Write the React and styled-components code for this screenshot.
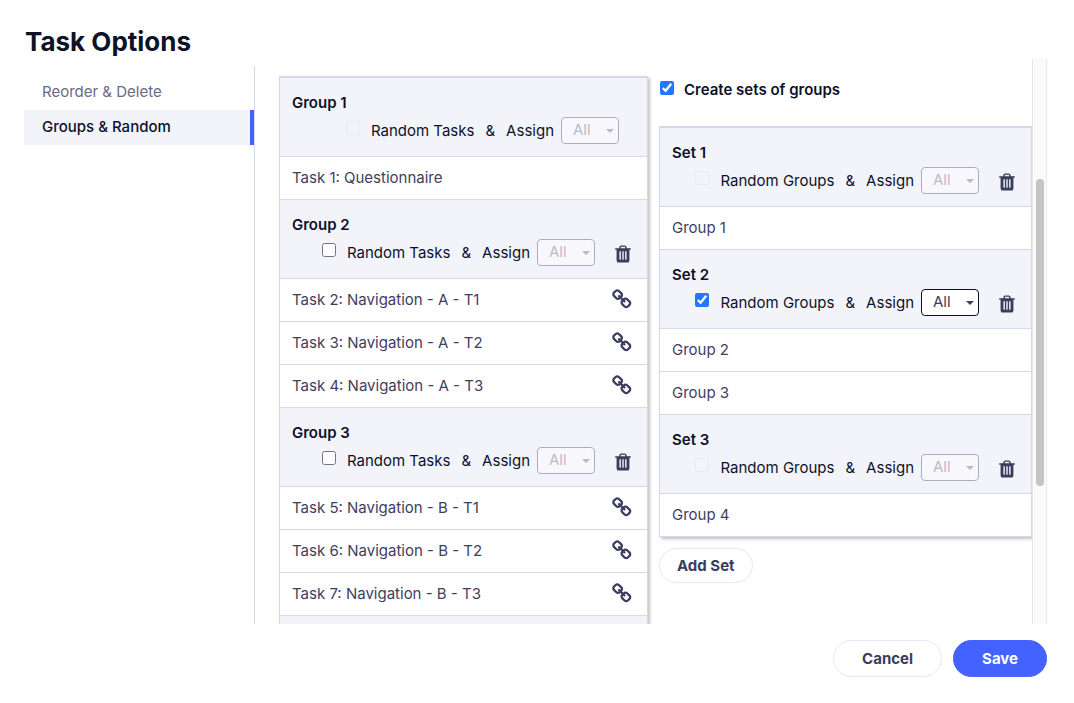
import React, { useState } from "react";
import styled, { createGlobalStyle, css } from "styled-components";

const GlobalStyle = createGlobalStyle`
  *, *::before, *::after { box-sizing: border-box; }
  body {
    margin: 0;
    background: #fff;
    color: #0d1229;
    font-family: Inter, "Liberation Sans", sans-serif;
    font-size: 15px;
    line-height: 20px;
  }
  button, select, input { font-family: inherit; margin: 0; }
`;

const Dialog = styled.main`
  display: flex;
  flex-direction: column;
  height: 100vh;
  padding: 24px 27px 26px 24px;
`;

const Title = styled.h1`
  margin: 0;
  padding-left: 1px;
  font-size: 26px;
  line-height: 35px;
  font-weight: 700;
`;

const Body = styled.div`
  display: flex;
  flex: 1;
  min-height: 0;
`;

const Sidebar = styled.nav`
  flex: 0 0 231px;
  display: flex;
  flex-direction: column;
  margin-top: 7px;
  padding-top: 9px;
  border-right: 1px solid #d3d8ea;
`;

const NavLink = styled.a`
  padding: 7px 18px 8px;
  color: #696a86;
  text-decoration: none;
  ${(p) =>
    p.$active &&
    css`
      color: #0d1229;
      font-weight: 500;
      background: #f3f4fa;
      border-right: 4px solid #4362ff;
    `}
`;

const Panels = styled.div`
  flex: 1;
  min-width: 0;
  display: grid;
  grid-template-columns: 369fr 373fr;
  gap: 11px;
  align-items: start;
  padding: 17px 0 0 24px;
  overflow: hidden;
`;

const ScrollTrack = styled.div`
  flex: 0 0 15px;
  display: flex;
  flex-direction: column;
  padding: 120px 3px 0 3px;
  background: #fafafa;
  border: solid #e8e8e8;
  border-width: 0 1px;
`;

const ScrollThumb = styled.div`
  flex: 0 1 307px;
  margin-right: -1px;
  border-radius: 4px;
  background: #c4c4c4;
`;

const Board = styled.div`
  border: 1px solid #d3d8ea;
  border-top-width: 2px;
  border-bottom: 0;
  box-shadow: 2px 2px 3px rgba(0, 0, 0, 0.24);
`;

const GroupHeader = styled.header`
  display: flex;
  flex-direction: column;
  height: 79px;
  padding: 15px 0 0 12px;
  background: #f3f4fa;
  border-bottom: 1px solid #d3d8ea;
`;

const GroupName = styled.h2`
  margin: 0;
  font-size: 15px;
  line-height: 20px;
  font-weight: 600;
`;

const Controls = styled.div`
  display: flex;
  align-items: center;
  justify-content: flex-end;
  height: 35px;
  padding-right: ${(p) => (p.$deletable ? 14 : 28)}px;
`;

const CheckLabel = styled.label`
  display: flex;
  align-items: center;
  gap: ${(p) => (p.$strong ? 10 : 11)}px;
  font-weight: ${(p) => (p.$strong ? 600 : 400)};
`;

const Checkbox = styled.input.attrs({ type: "checkbox" })`
  width: 14px;
  height: 14px;
  margin-bottom: 5px;
  accent-color: #2376ff;
  &:disabled { opacity: 0.25; }
`;

const Ampersand = styled.span`
  padding: 0 11px;
`;

const AssignLabel = styled.label`
  display: flex;
  align-items: center;
  gap: 7px;
`;

const SelectBox = styled.span`
  position: relative;
  display: flex;
  color: #3b3d5c;
  svg {
    position: absolute;
    right: 5px;
    top: 12px;
    pointer-events: none;
  }
`;

const Select = styled.select`
  appearance: none;
  width: 58px;
  height: 27px;
  padding: 0 20px 2px 11px;
  border: 1px solid #0d1229;
  border-radius: 4px;
  background: #fff;
  color: inherit;
  font-size: 15px;
  opacity: 1;
  &:disabled {
    color: #b9bac8;
    border-color: #adaebb;
    background: #f8f8fc;
  }
  &:disabled + svg { color: #b9bac8; }
`;

const IconButton = styled.button`
  display: flex;
  padding: 0;
  border: 0;
  background: none;
  color: #3b3d5c;
  cursor: pointer;
`;

const DeleteButton = styled(IconButton)`
  margin: 2px 0 0 18px;
`;

const Items = styled.ul`
  margin: 0;
  padding: 0;
  list-style: none;
`;

const Item = styled.li`
  display: flex;
  align-items: center;
  justify-content: space-between;
  height: 43px;
  padding: 0 14px 0 12px;
  background: #fff;
  color: #3f4061;
  border-bottom: 1px solid #d3d8ea;
`;

const LinkButton = styled(IconButton)`
  margin-bottom: 2px;
`;

const SetsColumn = styled.div`
  display: flex;
  flex-direction: column;
  align-items: flex-start;
  ${Board} { width: 100%; }
`;

const SetsToggle = styled.div`
  height: 50px;
  padding: 4px 0 0 1px;
`;

const Button = styled.button`
  height: 37px;
  padding: 0 28px;
  border: 1px solid #e6e7f7;
  border-radius: 19px;
  background: #fff;
  color: #3b3d5c;
  font-size: 15px;
  font-weight: 700;
  cursor: pointer;
  ${(p) =>
    p.$primary &&
    css`
      background: #4362ff;
      border-color: #4362ff;
      color: #fff;
    `}
  ${(p) =>
    p.$small &&
    css`
      height: 35px;
      padding: 0 17px;
      margin-top: 11px;
    `}
`;

const Footer = styled.footer`
  display: flex;
  justify-content: flex-end;
  gap: 11px;
  padding-top: 16px;
`;

const TrashIcon = () => (
  <svg width="20" height="20" viewBox="0 0 1792 1792" fill="currentColor" aria-hidden="true">
    <path d="M704 1376v-704q0-14-9-23t-23-9h-64q-14 0-23 9t-9 23v704q0 14 9 23t23 9h64q14 0 23-9t9-23zm256 0v-704q0-14-9-23t-23-9h-64q-14 0-23 9t-9 23v704q0 14 9 23t23 9h64q14 0 23-9t9-23zm256 0v-704q0-14-9-23t-23-9h-64q-14 0-23 9t-9 23v704q0 14 9 23t23 9h64q14 0 23-9t9-23zm-544-992h448l-48-117q-7-9-17-11h-317q-10 2-17 11zm928 32v64q0 14-9 23t-23 9h-96v948q0 83-47 143.500t-113 60.500h-832q-66 0-113-58.500t-47-141.500v-952h-96q-14 0-23-9t-9-23v-64q0-14 9-23t23-9h309l70-167q15-37 54-63t79-26h320q40 0 79 26t54 63l70 167h309q14 0 23 9t9 23z" />
  </svg>
);

const ChainIcon = () => (
  <svg width="21" height="21" viewBox="0 0 1792 1792" fill="currentColor" aria-hidden="true">
    <path d="M1456 1216q0-40-28-68l-208-208q-28-28-68-28-42 0-72 32 3 3 19 18.500t21.500 21.500 15 19 13 25.500 3.500 27.500q0 40-28 68t-68 28q-15 0-27.500-3.500t-25.500-13-19-15-21.500-21.500-18.500-19q-33 31-33 73 0 40 28 68l206 207q27 27 68 27 40 0 68-26l147-146q28-28 28-67zm-703-705q0-40-28-68l-206-207q-28-28-68-28-39 0-68 27l-147 146q-28 28-28 67 0 40 28 68l208 208q27 27 68 27 42 0 72-31-3-3-19-18.500t-21.500-21.500-15-19-13-25.500-3.500-27.500q0-40 28-68t68-28q15 0 27.500 3.500t25.500 13 19 15 21.500 21.500 18.500 19q33-31 33-73zm895 705q0 120-85 203l-147 146q-83 83-203 83-121 0-204-85l-206-207q-83-83-83-203 0-123 88-209l-88-88q-86 88-208 88-120 0-204-84l-208-208q-84-84-84-204t85-203l147-146q83-83 203-83 121 0 204 85l206 207q83 83 83 203 0 123-88 209l88 88q86-88 208-88 120 0 204 84l208 208q84 84 84 204z" />
  </svg>
);

const CaretIcon = () => (
  <svg width="8" height="4" viewBox="0 0 8 4" fill="currentColor" aria-hidden="true">
    <path d="M0 0h8L4 4z" />
  </svg>
);

const groups = [
  { name: "Group 1", locked: true, items: ["Task 1: Questionnaire"] },
  {
    name: "Group 2",
    deletable: true,
    linked: true,
    items: ["Task 2: Navigation - A - T1", "Task 3: Navigation - A - T2", "Task 4: Navigation - A - T3"],
  },
  {
    name: "Group 3",
    deletable: true,
    linked: true,
    items: ["Task 5: Navigation - B - T1", "Task 6: Navigation - B - T2", "Task 7: Navigation - B - T3"],
  },
];

const sets = [
  { name: "Set 1", locked: true, deletable: true, items: ["Group 1"] },
  { name: "Set 2", random: true, deletable: true, items: ["Group 2", "Group 3"] },
  { name: "Set 3", locked: true, deletable: true, items: ["Group 4"] },
];

function Group({ group, noun }) {
  const [random, setRandom] = useState(Boolean(group.random));
  return (
    <section>
      <GroupHeader>
        <GroupName>{group.name}</GroupName>
        <Controls $deletable={group.deletable}>
          <CheckLabel>
            <Checkbox
              checked={random}
              disabled={group.locked}
              onChange={(e) => setRandom(e.target.checked)}
            />
            Random {noun}
          </CheckLabel>
          <Ampersand>&amp;</Ampersand>
          <AssignLabel>
            Assign
            <SelectBox>
              <Select disabled={!random}>
                <option>All</option>
              </Select>
              <CaretIcon />
            </SelectBox>
          </AssignLabel>
          {group.deletable && (
            <DeleteButton type="button" aria-label={`Delete ${group.name}`}>
              <TrashIcon />
            </DeleteButton>
          )}
        </Controls>
      </GroupHeader>
      <Items>
        {group.items.map((item) => (
          <Item key={item}>
            {item}
            {group.linked && (
              <LinkButton type="button" aria-label={`Link ${item}`}>
                <ChainIcon />
              </LinkButton>
            )}
          </Item>
        ))}
      </Items>
    </section>
  );
}

export default function App() {
  const [useSets, setUseSets] = useState(true);
  return (
    <Dialog>
      <GlobalStyle />
      <Title>Task Options</Title>
      <Body>
        <Sidebar>
          <NavLink href="#reorder">Reorder &amp; Delete</NavLink>
          <NavLink href="#groups" $active>Groups &amp; Random</NavLink>
        </Sidebar>
        <Panels>
          <Board>
            {groups.map((g) => <Group key={g.name} group={g} noun="Tasks" />)}
            <GroupHeader />
          </Board>
          <SetsColumn>
            <SetsToggle>
              <CheckLabel $strong>
                <Checkbox checked={useSets} onChange={(e) => setUseSets(e.target.checked)} />
                Create sets of groups
              </CheckLabel>
            </SetsToggle>
            <Board>
              {sets.map((s) => <Group key={s.name} group={s} noun="Groups" />)}
            </Board>
            <Button type="button" $small>Add Set</Button>
          </SetsColumn>
        </Panels>
        <ScrollTrack>
          <ScrollThumb />
        </ScrollTrack>
      </Body>
      <Footer>
        <Button type="button">Cancel</Button>
        <Button type="button" $primary>Save</Button>
      </Footer>
    </Dialog>
  );
}
